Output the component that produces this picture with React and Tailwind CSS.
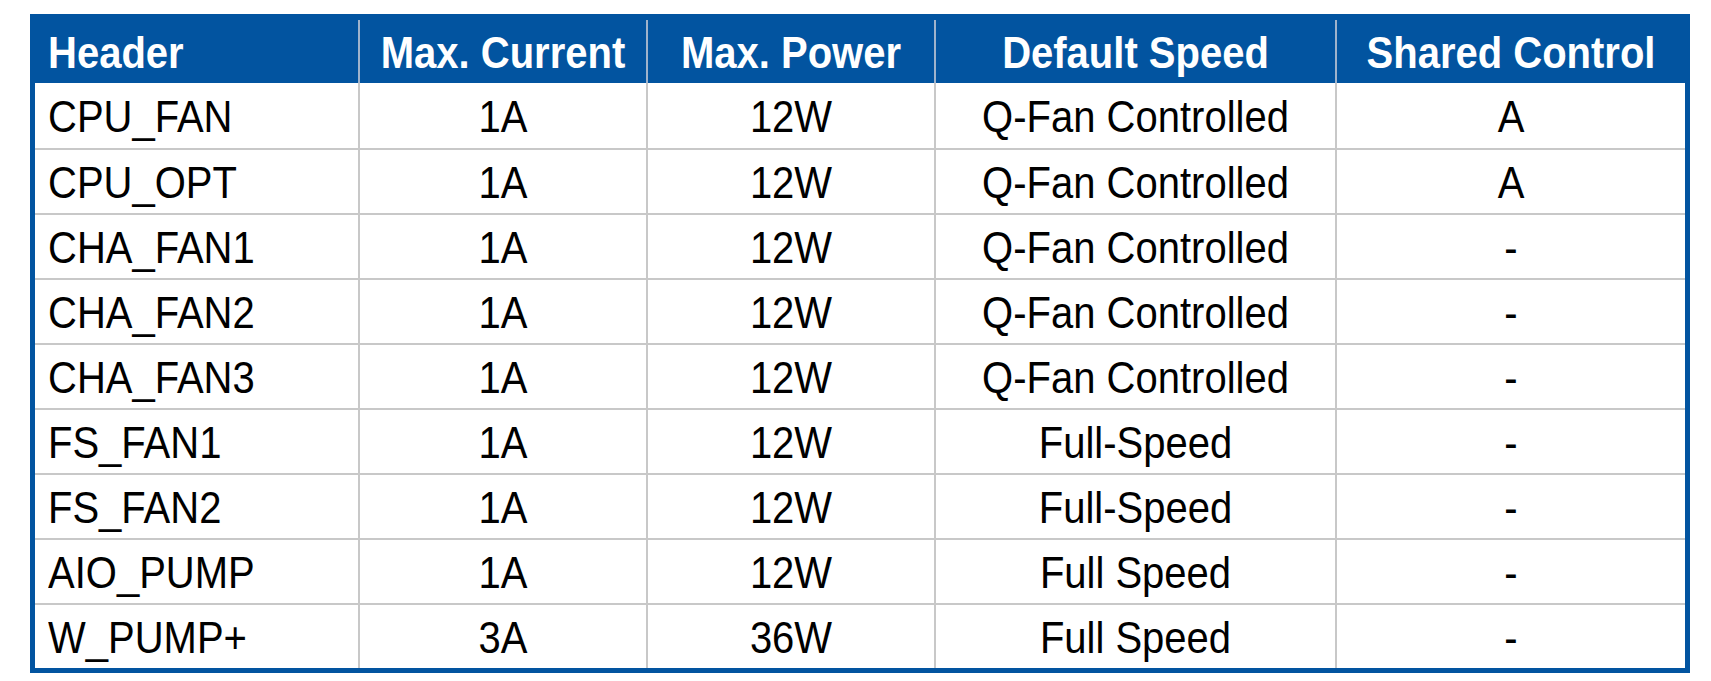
import React from 'react';

const rows = [
  ['CPU_FAN', '1A', '12W', 'Q-Fan Controlled', 'A'],
  ['CPU_OPT', '1A', '12W', 'Q-Fan Controlled', 'A'],
  ['CHA_FAN1', '1A', '12W', 'Q-Fan Controlled', '-'],
  ['CHA_FAN2', '1A', '12W', 'Q-Fan Controlled', '-'],
  ['CHA_FAN3', '1A', '12W', 'Q-Fan Controlled', '-'],
  ['FS_FAN1', '1A', '12W', 'Full-Speed', '-'],
  ['FS_FAN2', '1A', '12W', 'Full-Speed', '-'],
  ['AIO_PUMP', '1A', '12W', 'Full Speed', '-'],
  ['W_PUMP+', '3A', '36W', 'Full Speed', '-'],
];

const heads = ['Header', 'Max. Current', 'Max. Power', 'Default Speed', 'Shared Control'];

const cols = 'grid grid-cols-[323px_288px_288px_401px_350px]';

const Txt = ({ children }) => (
  <span className="inline-block scale-y-[1.12] leading-none">{children}</span>
);

export default function App() {
  return (
    <div className="min-h-screen bg-white pt-[14px] pl-[30px]" style={{ fontFamily: '"Liberation Sans", Arial, sans-serif' }}>
      <div className="w-[1660px] border-x-[5px] border-b-[5px] border-t-[6px] border-[#0254a0]">
        {/* header row */}
        <div className={`${cols} h-[63px] bg-[#0254a0] text-white font-bold text-[40px]`}>
          {heads.map((h, i) => (
            <div
              key={h}
              className={`flex items-center ${i === 0 ? 'pl-[13px]' : 'justify-center border-l-2 border-[#9fb3cc]'}`}
            >
              <Txt>{h}</Txt>
            </div>
          ))}
        </div>

        {/* body rows */}
        {rows.map((r, ri) => (
          <div key={r[0]} className={`${cols} h-[65px] text-black text-[40px] ${ri === 0 ? '' : 'border-t-2 border-[#c8c8c8]'}`}>
            {r.map((c, i) => (
              <div
                key={i}
                className={`flex items-center ${i === 0 ? 'pl-[13px]' : 'justify-center border-l-2 border-[#c8c8c8]'}`}
              >
                <Txt>{c}</Txt>
              </div>
            ))}
          </div>
        ))}
      </div>
    </div>
  );
}
